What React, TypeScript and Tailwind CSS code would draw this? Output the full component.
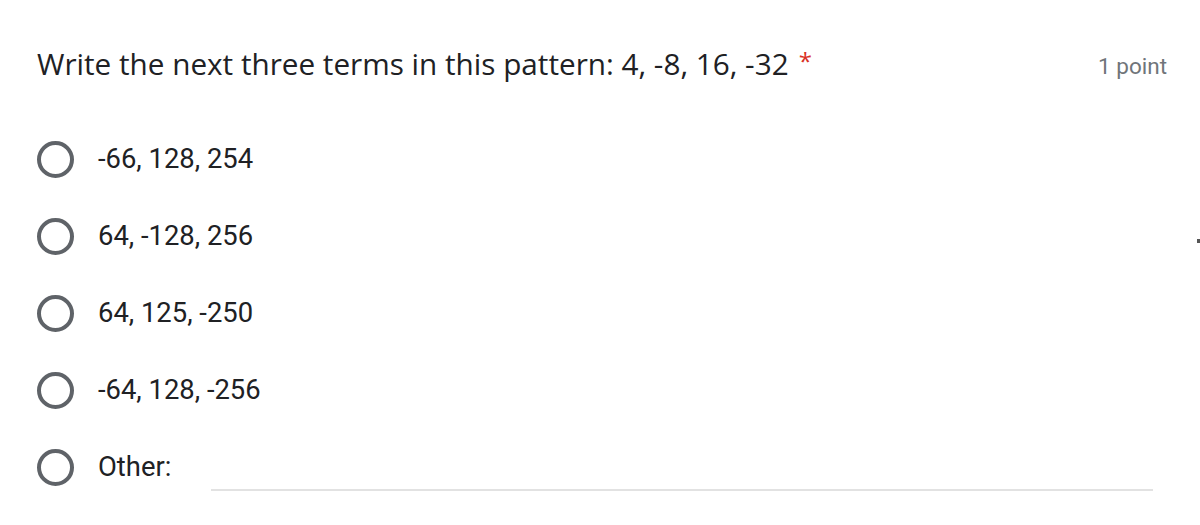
import React from 'react'

const options = ['-66, 128, 254', '64, -128, 256', '64, 125, -250', '-64, 128, -256']

function Radio() {
  return <span className="block w-[37px] h-[37px] rounded-full border-[4px] border-[#5f6368] shrink-0" />
}

export default function App() {
  return (
    <div className="relative w-[1200px] h-[525px] bg-white overflow-hidden" style={{ fontFamily: 'Roboto, "Liberation Sans", sans-serif' }}>
      <div className="flex items-start justify-between pl-[37px] pr-[33px] pt-[44px]">
        <h1 className="flex items-start text-[29.7px] leading-[40px] text-[#202124]" style={{ fontFamily: '"Open Sans", Roboto, sans-serif' }}>
          Write the next three terms in this pattern: 4, -8, 16, -32
          <span className="text-[#d93025] text-[24px] leading-[34px] ml-[10px]">*</span>
        </h1>
        <span className="text-[22.5px] leading-[40px] mt-[2px] text-[#70757a]">1 point</span>
      </div>

      <div className="flex flex-col pl-[37px] mt-[35px]">
        {options.map(o => (
          <div key={o} className="flex items-center h-[77px]">
            <Radio />
            <span className="ml-[24px] text-[27.4px] text-[#202124]">{o}</span>
          </div>
        ))}
        <div className="flex items-center h-[77px]">
          <Radio />
          <span className="ml-[24px] w-[113px] text-[27.4px] text-[#202124]">Other:</span>
          <div className="mt-[44px] w-[942px] h-[2px] bg-[#e2e2e2]" />
        </div>
      </div>

      <span className="absolute left-[1197px] top-[239px] w-[3px] h-[4px] bg-[#555]" />
    </div>
  )
}
